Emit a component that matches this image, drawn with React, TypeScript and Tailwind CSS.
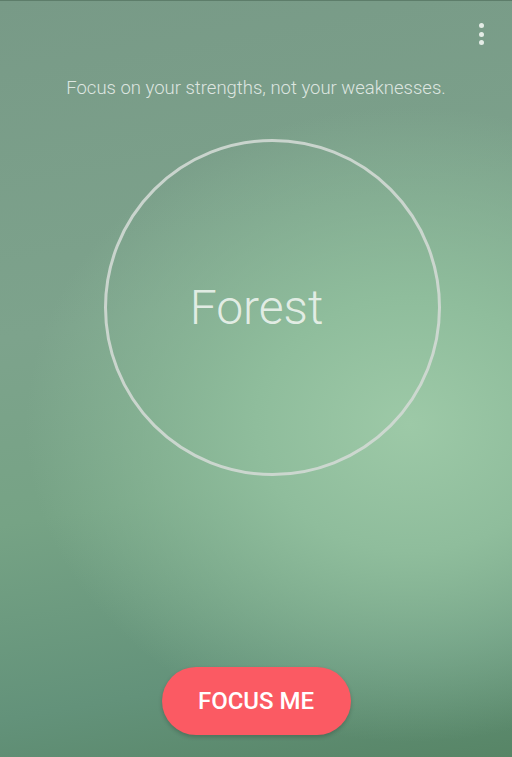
export default function App() {
    return (
        <div
            className="relative w-[512px] h-[757px] overflow-hidden flex flex-col border-t border-[#5d7d6a] bg-[radial-gradient(ellipse_75%_42%_at_80%_56%,#9dc9a7_0%,#8fbd9c_40%,rgba(122,158,138,0)_100%),linear-gradient(170deg,#789a87_0%,#7da38c_40%,#76a385_62%,#63927a_85%,#578566_100%)]"
            style={{ fontFamily: "Roboto, 'Noto Sans', sans-serif" }}
        >
            <button className="absolute top-[18px] right-[24px] flex flex-col gap-[3.5px] p-1">
                <span className="w-[5px] h-[5px] rounded-full bg-[#e4ece6]" />
                <span className="w-[5px] h-[5px] rounded-full bg-[#e4ece6]" />
                <span className="w-[5px] h-[5px] rounded-full bg-[#e4ece6]" />
            </button>

            <p className="mt-[76px] text-center text-[18.5px] leading-[22px] font-light text-white/75">
                Focus on your strengths, not your weaknesses.
            </p>

            <div className="mt-[40px] ml-[104px] w-[337px] h-[337px] rounded-full border-[3px] border-[#d2d9d4]/90 flex items-center justify-center pr-[32px]">
                <span className="text-[48px] leading-none font-light text-[#eef4ef]/90">Forest</span>
            </div>

            <div className="mt-auto mb-[22px] flex justify-center">
                <button className="w-[189px] h-[68px] rounded-full bg-[#fb5a63] text-white text-[24px] font-medium shadow-[0_2px_4px_rgba(0,0,0,0.2)]">
                    FOCUS ME
                </button>
            </div>
        </div>
    );
}
